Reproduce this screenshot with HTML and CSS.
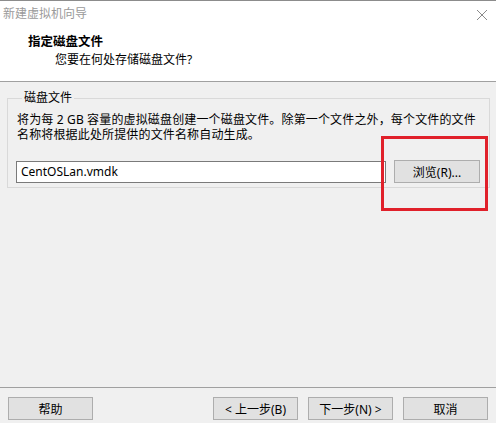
FILE: index.html
```html
<!DOCTYPE html>
<html lang="zh-CN">
<head>
  <meta charset="UTF-8" />
  <title>新建虚拟机向导</title>
  <link rel="stylesheet" href="styles.css">
</head>
<body>

<div class="window">
  <div class="titlebar">
    <span class="title">新建虚拟机向导</span>
    <svg class="close" width="12" height="12" viewBox="0 0 12 12">
      <path d="M1 1 L11 11 M11 1 L1 11" stroke="#8a8a8a" stroke-width="1" fill="none" />
    </svg>
  </div>

  <div class="header">
    <h2>指定磁盘文件</h2>
    <p>您要在何处存储磁盘文件?</p>
  </div>

  <main class="content">
    <fieldset class="group">
      <legend>磁盘文件</legend>
      <p class="desc">将为每 2 GB 容量的虚拟磁盘创建一个磁盘文件。除第一个文件之外，每个文件的文件<br>名称将根据此处所提供的文件名称自动生成。</p>
      <div class="file-row">
        <input type="text" class="file-input" value="CentOSLan.vmdk" />
        <button class="btn browse">浏览(R)...</button>
        <div class="highlight"></div>
      </div>
    </fieldset>
  </main>

  <footer class="footer">
    <button class="btn">帮助</button>
    <div class="nav">
      <button class="btn">&lt; 上一步(B)</button>
      <button class="btn">下一步(N) &gt;</button>
      <button class="btn">取消</button>
    </div>
  </footer>
</div>

</body>
</html>
```

FILE: styles.css
```css
/* wizard dialog */
* { box-sizing: border-box; margin: 0; padding: 0; }
body { font-family: "Segoe UI", "Noto Sans", "Noto Sans CJK SC", sans-serif; font-size: 12px; color: #000; background: #f0f0f0; }
.window { width: 496px; height: 423px; display: flex; flex-direction: column; border-top: 1px solid #8c8c8c; background: #f0f0f0; }

.titlebar { height: 26px; background: #fff; display: flex; align-items: center; justify-content: space-between; padding: 0 8px 0 3px; }
.title { color: #9a9a9a; font-size: 12px; line-height: 16px; }
.close { margin-top: 1px; }

.header { background: #fff; padding: 7px 0 13px 28px; border-bottom: 1px solid #a0a0a0; }
.header h2 { font-size: 12.5px; font-weight: bold; line-height: 16px; }
.header p { margin-left: 27px; margin-top: 2px; line-height: 16px; }

.content { flex: 1; padding: 9px 7px 0 7px; }
.group { border: 1px solid #d9d9d9; padding: 0 9px 4px 9px; }
.group legend { margin-left: 5px; padding: 0 2px; line-height: 14px; }
.desc { margin-top: 7px; line-height: 15px; white-space: nowrap; letter-spacing: 0.15px; }

.file-row { position: relative; display: flex; align-items: center; margin-top: 18px; margin-left: -1px; }
.file-input { width: 370px; height: 22px; border: 1px solid #7a7a7a; background: #fff; padding: 0 4px; font-family: inherit; font-size: 12px; color: #000; outline: none; }
.btn { width: 85px; height: 23px; background: #e1e1e1; border: 1px solid #adadad; font-family: inherit; font-size: 12px; color: #000; }
.browse { width: 86px; margin-left: 8px; }
.highlight { position: absolute; left: 365px; top: -24px; width: 107px; height: 75px; border: 3px solid #e0202a; pointer-events: none; }

.footer { border-top: 1px solid #a0a0a0; padding: 9px 8px 3px 8px; display: flex; justify-content: space-between; }
.nav { display: flex; gap: 10px; }
```
